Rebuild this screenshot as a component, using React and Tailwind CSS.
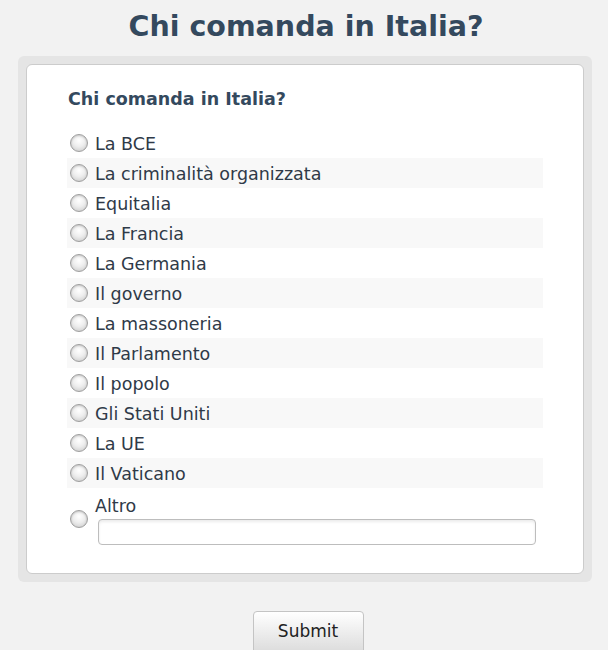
const OPTIONS = [
  'La BCE',
  'La criminalità organizzata',
  'Equitalia',
  'La Francia',
  'La Germania',
  'Il governo',
  'La massoneria',
  'Il Parlamento',
  'Il popolo',
  'Gli Stati Uniti',
  'La UE',
  'Il Vaticano',
];

function Radio() {
  return (
    <span className="inline-block w-[18px] h-[18px] shrink-0 rounded-full border border-[#9e9e9e] bg-[radial-gradient(circle_at_50%_35%,#ffffff_0%,#eeeeee_45%,#c8c8c8_100%)] shadow-[inset_0_1px_2px_rgba(0,0,0,0.18)]" />
  );
}

export default function App() {
  return (
    <div className="min-h-[650px] bg-[#f2f2f2] text-[#34495e] font-['DejaVu_Sans',Verdana,sans-serif]">
      <h1 className="text-center text-[28.5px] font-bold leading-none pt-[13px] pb-[12px] pl-[4px]">Chi comanda in Italia?</h1>

      <div className="ml-[18px] mr-[16px] mt-[2px] rounded-[6px] bg-[#e5e5e5] p-[8px]">
        <div className="rounded-[6px] border border-[#cccccc] bg-white pl-[40px] pr-[40px] pt-[24px] pb-[28px]">
          <h2 className="text-[17.5px] font-bold leading-[20px] pl-[1px]">Chi comanda in Italia?</h2>

          <div className="mt-[19px] flex flex-col">
            {OPTIONS.map((label, i) => (
              <label
                key={label}
                className={`flex items-center h-[30px] pl-[3px] pt-[1px] gap-[7px] text-[17.5px] text-[#2f3a48] ${i % 2 === 1 ? 'bg-[#f8f8f8]' : ''}`}
              >
                <Radio />
                <span className="pt-[2px]">{label}</span>
              </label>
            ))}

            <div className="flex items-center pl-[3px] gap-[10px] pt-[6px]">
              <Radio />
              <div className="flex-1 flex flex-col">
                <span className="text-[17.5px] leading-[24px] text-[#2f3a48] -ml-[3px]">Altro</span>
                <div className="mt-[1px] h-[26px] rounded-[4px] border border-[#bdbdbd] bg-white shadow-[inset_0_2px_3px_rgba(0,0,0,0.08)] mr-[7px]" />
              </div>
            </div>
          </div>
        </div>
      </div>

      <div className="flex justify-center pt-[29px] pl-[8px]">
        <button className="w-[111px] h-[42px] rounded-t-[4px] border border-[#c4c4c4] bg-gradient-to-b from-[#ffffff] to-[#dcdcdc] text-[17px] text-[#222]">
          Submit
        </button>
      </div>
    </div>
  );
}
